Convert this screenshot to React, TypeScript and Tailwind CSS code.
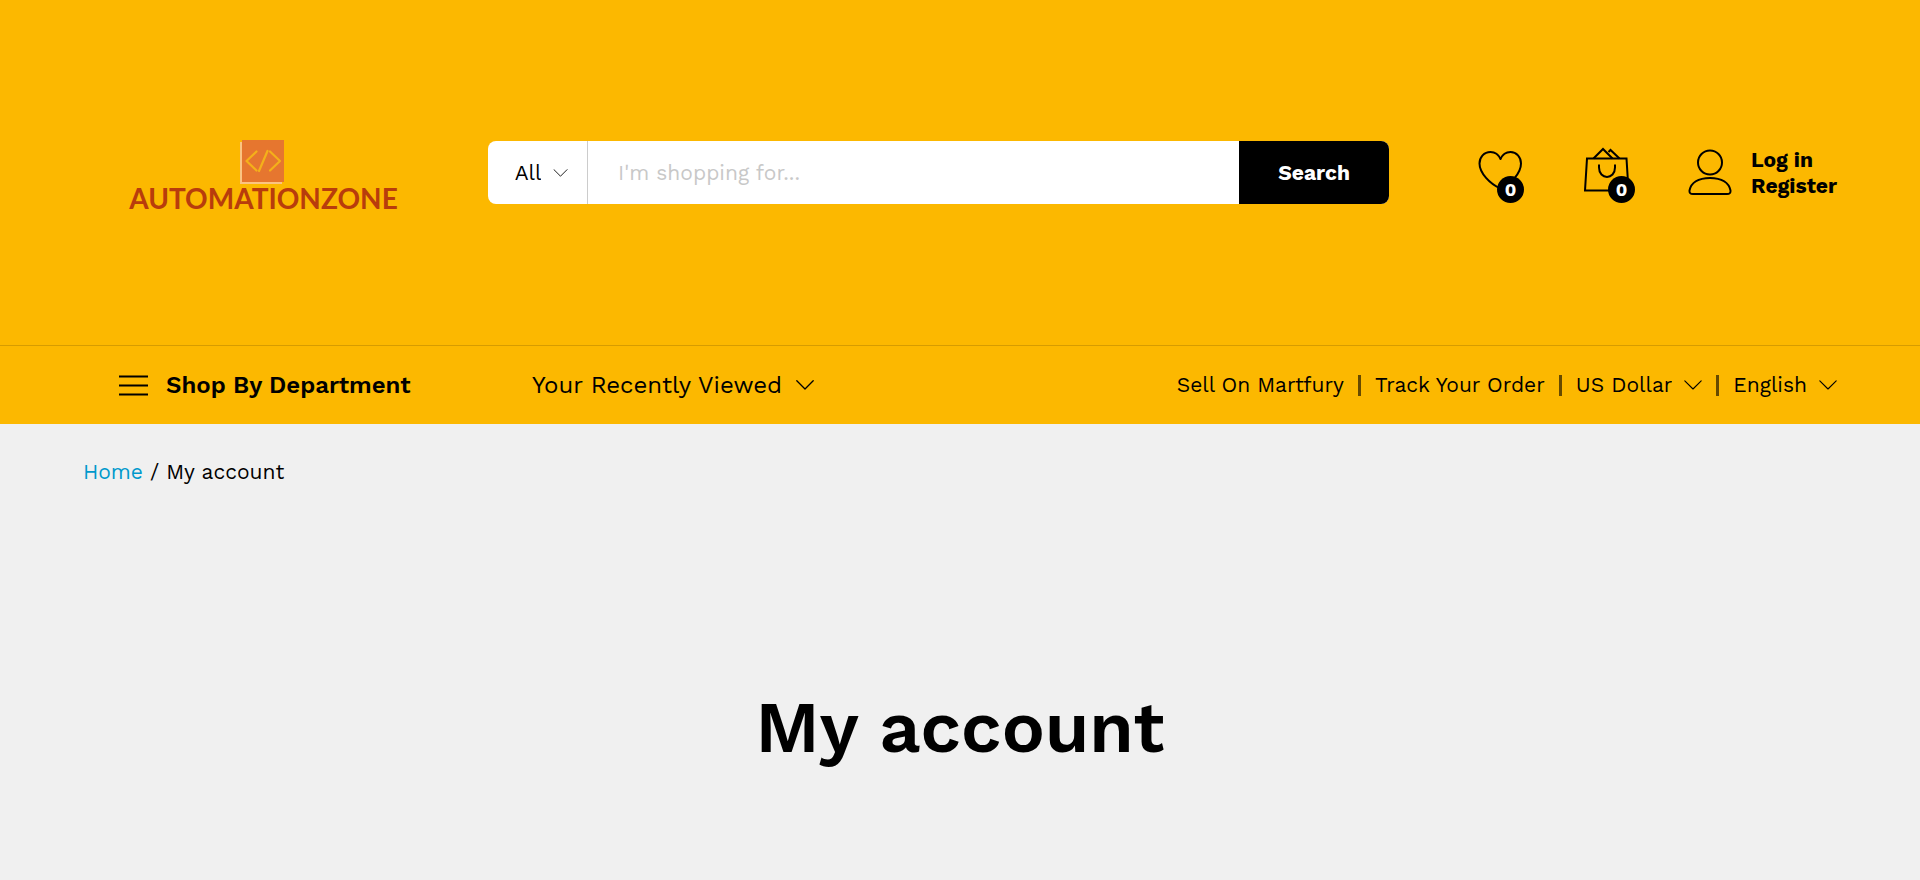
import type { ReactNode } from 'react';

function Chevron({ className, strokeWidth = 1.3 }: { className: string; strokeWidth?: number }) {
  return (
    <svg className={className} viewBox="0 0 18 10" fill="none" stroke="currentColor" strokeWidth={strokeWidth} strokeLinecap="round" strokeLinejoin="round" aria-hidden="true">
      <path d="M0.8 0.8 9 9 17.2 0.8" />
    </svg>
  );
}

function Logo() {
  return (
    <a href="#" className="flex flex-col items-center gap-0.5 pt-[5px] text-[#b83c0c]">
      <svg className="h-11 w-[46px]" viewBox="0 0 46 44" fill="none" aria-hidden="true">
        <path d="M0 2h42v42H0z" fill="#fbc481" />
        <path d="M2 0h42v42H2z" fill="#e6762f" />
        <g stroke="#f4b01a" strokeWidth="2.2" strokeLinecap="round" strokeLinejoin="round">
          <path d="M16.500 11.500 6.500 21 16.500 30.500" />
          <path d="M30 11.500 40 21 30 30.500" />
          <path d="M27.500 11 19 31" />
        </g>
      </svg>
      <span className="font-[Lato] text-[28px] leading-6 font-bold">AUTOMATIONZONE</span>
    </a>
  );
}

function IconLink({ label, count, children }: { label: string; count: number; children: ReactNode }) {
  return (
    <a href="#" aria-label={label} className="relative block h-[61px] w-12 pt-[5px]">
      {children}
      <span className="absolute right-0 bottom-0 flex h-[27px] w-[27px] items-center justify-center rounded-full bg-black text-lg font-bold text-white">
        {count}
      </span>
    </a>
  );
}

function Picker({ label, value }: { label: string; value: string }) {
  return (
    <span className="flex items-center gap-3">
      <select aria-label={label} defaultValue={value} className="field-sizing-content appearance-none bg-transparent">
        <option>{value}</option>
      </select>
      <Chevron className="pointer-events-none h-[10px] w-[18px]" strokeWidth={1.1} />
    </span>
  );
}

function Separator() {
  return <span className="h-[21px] w-[3px] bg-[#664a00]" />;
}

export default function App() {
  return (
    <div className="min-h-screen bg-[#f0f0f0] font-['Work_Sans',Inter,sans-serif] text-[21px] text-black">
      <header className="bg-[#fcb800]">
        <div className="flex items-center border-b border-[#d69c00] px-[83px] py-[135px]">
          <div className="flex w-[405px] shrink-0 justify-center pr-[44px]">
            <Logo />
          </div>
          <form className="flex h-[63px] flex-1 overflow-hidden rounded-lg bg-white" onSubmit={(e) => e.preventDefault()}>
            <div className="flex w-[100px] items-center justify-center gap-3 border-r border-[#ccc] pl-2">
              <select aria-label="Category" className="field-sizing-content appearance-none bg-transparent">
                <option>All</option>
              </select>
              <Chevron className="pointer-events-none h-2 w-[15px]" strokeWidth={1.1} />
            </div>
            <input type="text" aria-label="Search products" placeholder="I'm shopping for..." className="min-w-0 flex-1 px-[30px] outline-none placeholder:text-[#c8c8c8]" />
            <button type="submit" className="w-[150px] bg-black font-bold text-white">Search</button>
          </form>
          <div className="ml-[87px] flex items-center">
            <IconLink label="Wishlist" count={0}>
              <svg className="h-12 w-12" viewBox="0 0 48 48" fill="none" stroke="currentColor" strokeWidth="2" strokeLinejoin="round" aria-hidden="true">
                <path d="M24.500 12C22.500 7.500 19 5 14.500 5 8 5 3.500 10 3.500 16.500 3.500 26 14 37 24.500 41.500 35 37 45 26 45 16.500 45 10 40.500 5 34.500 5 30 5 26.500 7.500 24.500 12Z" />
              </svg>
            </IconLink>
            <div className="ml-[63px]">
              <IconLink label="Cart" count={0}>
                <svg className="h-12 w-12 overflow-visible" viewBox="0 0 48 48" fill="none" stroke="currentColor" strokeWidth="2" aria-hidden="true">
                  <path d="M0 11.500H39.500L41.500 43.500H-2Z" />
                  <path d="M6.500 11.500 16 2 25.500 11.500M21.500 5 23.500 3 32.500 11.500M12 17.500V20.500C12 33 28 33 28 20.500V17.500" />
                </svg>
              </IconLink>
            </div>
            <a href="#" aria-label="Account" className="ml-[53px] block">
              <svg className="h-12 w-11" viewBox="0 0 44 48" fill="none" stroke="currentColor" strokeWidth="2" aria-hidden="true">
                <circle cx="22" cy="13.500" r="12" />
                <path d="M5 45H39Q43 45 42.500 41.500C41 34 34 29 22 29S3 34 1.500 41.500Q1 45 5 45Z" />
              </svg>
            </a>
            <div className="ml-[19px] flex flex-col leading-[26px] font-bold">
              <a href="#">Log in</a>
              <a href="#">Register</a>
            </div>
          </div>
        </div>
        <nav className="flex h-[78px] items-center pr-[83px] pl-[119px]">
          <button type="button" className="flex w-[413px] items-center gap-[18px] text-2xl font-semibold">
            <svg className="h-[21px] w-[29px]" viewBox="0 0 29 21" stroke="currentColor" strokeWidth="1.8" aria-hidden="true">
              <path d="M0 1.500H29M0 10.500H29M0 19.500H29" />
            </svg>
            Shop By Department
          </button>
          <button type="button" className="flex items-center gap-[14px] text-2xl">
            Your Recently Viewed
            <Chevron className="h-[10px] w-[18px]" />
          </button>
          <div className="ml-auto flex items-center gap-[14px]">
            <a href="#">Sell On Martfury</a>
            <Separator />
            <a href="#">Track Your Order</a>
            <Separator />
            <Picker label="Currency" value="US Dollar" />
            <Separator />
            <Picker label="Language" value="English" />
          </div>
        </nav>
      </header>
      <main className="px-[83px] pt-[33px]">
        <nav aria-label="Breadcrumb" className="flex gap-[7px] leading-[30px]">
          <a href="#" className="text-[#09c]">Home</a>
          <span>/</span>
          <span>My account</span>
        </nav>
        <h1 className="mt-[198px] text-center text-7xl leading-[84px] font-semibold">My account</h1>
      </main>
    </div>
  );
}
